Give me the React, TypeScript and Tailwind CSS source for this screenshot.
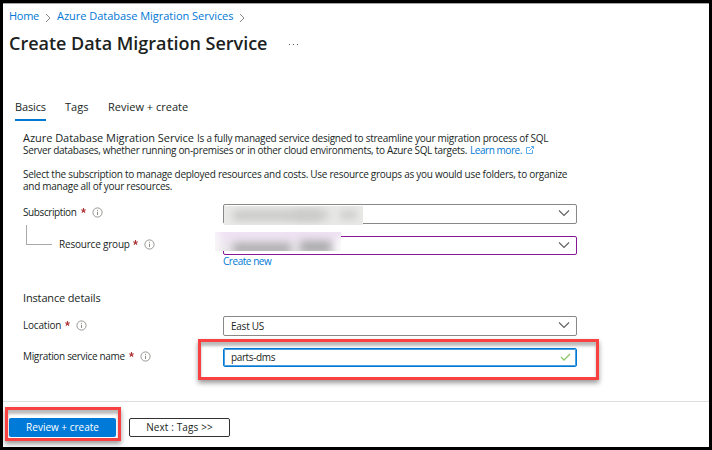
import type { ReactNode } from "react";

function Info() {
  return (
    <svg className="mt-[3px] h-[11px] w-[11px] shrink-0" viewBox="0 0 11 11" fill="none" stroke="#8d8b89">
      <circle cx="5.5" cy="5.5" r="4.6" strokeWidth="0.9" />
      <path d="M5.5 4.8v3.2M5.5 2.9v1" strokeWidth="1" />
    </svg>
  );
}

function Chevron() {
  return (
    <svg className="h-[8px] w-[12px]" viewBox="0 0 12 8" fill="none" stroke="#605e5c" strokeWidth="1.1">
      <path d="M1 1.5l5 5 5-5" />
    </svg>
  );
}

function Crumb() {
  return (
    <svg className="mt-[3px] h-[10px] w-[6px]" viewBox="0 0 6 10" fill="none" stroke="#8a8886" strokeWidth="1">
      <path d="M1 1l4 4-4 4" />
    </svg>
  );
}

function Star() {
  return (
    <svg className="mt-[4px] h-[5px] w-[5px] shrink-0" viewBox="0 0 5 5" fill="none" stroke="#b0353a" strokeWidth="1.1">
      <path d="M2.5 0v2.5M0.2 1.7l2.3 0.8 2.3-0.8M1 4.6l1.5-2.1L4 4.6" />
    </svg>
  );
}

function Label({ children, width }: { children: ReactNode; width: string }) {
  return (
    <div className="flex h-4 items-start leading-4">
      <span className={width}>{children}</span>
      <Star />
      <span className="w-[6px]" />
      <Info />
    </div>
  );
}

function Select({ children, className }: { children?: ReactNode; className: string }) {
  return (
    <div className={`flex w-[354px] items-center justify-between rounded-[2px] border pr-[6px] pb-[2px] pl-[7px] ${className}`}>
      <span className="pt-[2px] tracking-[-0.25px]">{children}</span>
      <Chevron />
    </div>
  );
}

export default function App() {
  return (
    <div className="relative h-[450px] w-[712px] overflow-hidden border-3 border-black bg-white font-['Open_Sans',sans-serif] text-[10px] whitespace-nowrap text-[#201f1e] shadow-[inset_0_1px_0_#a6a6a6]">
      <nav className="mt-[5px] flex h-4 items-center pl-[6px] text-[11px] leading-4 text-[#0078d4]">
        <span className="w-[36px] tracking-[-0.3px]">Home</span>
        <Crumb />
        <span className="ml-[6px] w-[182px] tracking-[-0.03px]">Azure Database Migration Services</span>
        <Crumb />
      </nav>
      <div className="mt-[7px] flex h-6 items-center pl-[6px] text-[18px] leading-6 font-semibold">
        <h1 className="w-[280px] tracking-[-0.02px]">Create Data Migration Service</h1>
        <span className="flex gap-[3px] pt-[2px]">
          <i className="h-px w-px bg-[#605e5c]" />
          <i className="h-px w-px bg-[#605e5c]" />
          <i className="h-px w-px bg-[#605e5c]" />
        </span>
      </div>
      <div className="mt-[44px] flex h-[22px] pl-[12px] text-[11px] leading-4">
        <span className="mr-[19px] w-[31px] border-b-2 border-[#0078d4] tracking-[-0.15px]">Basics</span>
        <span className="w-[43px]">Tags</span>
        <span>Review + create</span>
      </div>

      <div className="mt-[11px] pl-[20px] leading-3">
        <div className="flex h-3">
          <span className="w-[174px] text-[11px] tracking-[-0.04px]">Azure Database Migration Service</span>
          <span className="tracking-[-0.26px]">Is a fully managed service designed to streamline your migration process of SQL</span>
        </div>
        <div className="flex h-3">
          <span className="w-[447px] tracking-[-0.31px]">Server databases, whether running on-premises or in other cloud environments, to Azure SQL targets.</span>
          <span className="w-[56px] tracking-[-0.45px] text-[#0078d4]">Learn more.</span>
          <svg className="mt-[2px] h-[8px] w-[8px]" viewBox="0 0 8 8" fill="none" stroke="#4ba3e3" strokeWidth="0.9">
            <path d="M4 1.5H.5v6h6V4M3 5l4.3-4.3M5 .5h2.5V3" />
          </svg>
        </div>
        <div className="mt-3 h-3 tracking-[-0.265px]">Select the subscription to manage deployed resources and costs. Use resource groups as you would use folders, to organize</div>
        <div className="h-3 tracking-[-0.27px]">and manage all of your resources.</div>
      </div>

      <div className="mt-3 flex h-8 pl-5">
        <div className="w-[200px] tracking-[-0.4px]"><Label width="w-[58px]">Subscription</Label></div>
        <div className="relative h-5">
          <Select className="h-5 border-[#8a8886]" />
          <div className="absolute top-[2px] left-px h-[19px] w-[139px] overflow-hidden bg-[#eaeae9]">
            <div className="absolute top-[5px] left-[9px] h-[9px] w-[88px] bg-[#c4c4c3] blur-[4px]" />
            <div className="absolute top-[5px] left-[70px] h-[8px] w-[35px] bg-[#cbcbca] blur-[4px]" />
            <div className="absolute top-[5px] left-[116px] h-[8px] w-[17px] bg-[#c8c8c7] blur-[4px]" />
          </div>
        </div>
      </div>
      <div className="flex h-[54px] pl-5">
        <div className="flex w-[200px]">
          <span className="-mt-[11px] mr-[7px] ml-[3px] h-[20px] w-[26px] border-b border-l border-[#a9a9a9]" />
          <div className="tracking-[-0.2px]"><Label width="w-[74px]">Resource group</Label></div>
        </div>
        <div className="relative">
          <Select className="h-[19px] border-[#881798]" />
          <div className="absolute -top-[4px] -left-[8px] h-[19px] w-[126px] overflow-hidden bg-linear-to-b from-[#efe2f4] to-[#ebe9ec]">
            <div className="absolute top-[11px] left-[18px] h-[11px] w-[58px] bg-[#acaaad] blur-[4px]" />
            <div className="absolute top-[9px] left-[85px] h-[12px] w-[31px] bg-[#a8a7a9] blur-[4px]" />
            <div className="absolute -top-[3px] -left-[6px] h-[26px] w-[10px] bg-white/80 blur-[4px]" />
            <div className="absolute top-[6px] -right-[4px] h-[18px] w-[8px] bg-white/90 blur-[3px]" />
          </div>
          <div className="leading-3 tracking-[-0.45px] text-[#0078d4]">Create new</div>
        </div>
      </div>

      <h2 className="h-[26px] pl-5 text-[11px] leading-4 tracking-[-0.15px]">Instance details</h2>
      <div className="flex h-8 pl-5">
        <div className="w-[200px] pt-px tracking-[-0.2px]"><Label width="w-[42px]">Location</Label></div>
        <Select className="h-5 border-[#8a8886]">East US</Select>
      </div>
      <div className="flex h-[53px] pl-5">
        <div className="w-[200px] tracking-[-0.33px]"><Label width="w-[106px]">Migration service name</Label></div>
        <div className="flex h-[19px] w-[354px] items-center justify-between rounded-[2px] border border-[#0078d4] pr-[5px] pl-[7px] shadow-[inset_0_0_0_1px_#4aa0e0]">
          <span className="tracking-[-0.38px]">parts-dms</span>
          <svg className="mb-[2px] h-[8px] w-[11px]" viewBox="0 0 11 8" fill="none" stroke="#8cc665" strokeWidth="1.3">
            <path d="M1 4l3 3L10 1" />
          </svg>
        </div>
      </div>

      <footer className="flex gap-[13px] border-t border-[#e1dfdd] pt-[16px] pl-[6px]">
        <div className="flex h-[19px] w-[107px] items-center justify-center rounded-[2px] bg-[#007ad8] text-white">Review + create</div>
        <div className="flex h-[19px] w-[101px] items-center justify-center rounded-[2px] border border-[#323130] tracking-[0.12px]">Next : Tags &gt;&gt;</div>
      </footer>

      <div className="absolute top-[336px] left-[195px] h-[41px] w-[401px] border-3 border-[#fa4142] shadow-[0_3px_5px_#0006,inset_0_4px_3px_#0004]" />
      <div className="absolute top-[404px] left-[2px] h-[34px] w-[116px] border-3 border-[#fa4142] shadow-[0_3px_5px_#0006,inset_0_4px_3px_#0004]" />
    </div>
  );
}
